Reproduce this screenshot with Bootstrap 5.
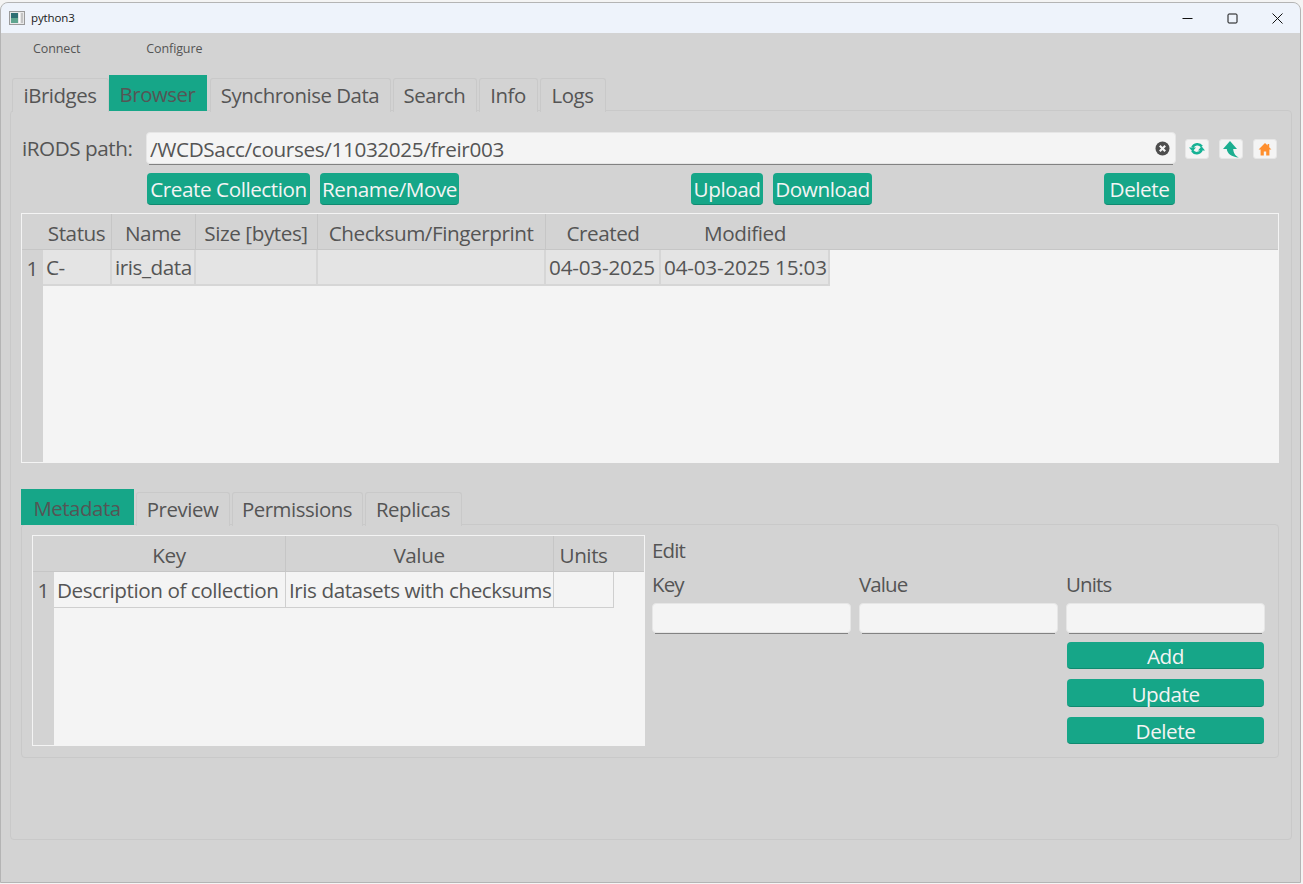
<!DOCTYPE html>
<html lang="en">
<head>
  <meta charset="UTF-8" />
  <meta name="viewport" content="width=device-width, initial-scale=1.0"/>
  <title>python3</title>
  <link href="https://cdn.jsdelivr.net/npm/bootstrap@5.3.2/dist/css/bootstrap.min.css" rel="stylesheet" />
  <style>
    html, body { height: 100%; }
    body {
      background-color: #f4f4f4;
      font-family: "Open Sans", "Noto Sans", sans-serif;
      font-size: 20.7px;
      letter-spacing: -0.45px;
      color: #555;
      overflow: hidden;
    }
    .app-window {
      margin: 2px 2px 0 0;
      height: 881px;
      background: #d3d3d3;
      border: 1px solid #b4b4b4;
      border-top-left-radius: 8px;
      border-top-right-radius: 8px;
      overflow: hidden;
    }
    .title-bar { height: 30px; background: #eef3fb; color: #1a1a1a; font-size: 11.5px; letter-spacing: -0.1px; padding-left: 8px; }
    .title-bar .app-ico { width: 16px; height: 14px; margin-right: 6px; }
    .win-btn { width: 45px; height: 30px; }
    .menu-row { height: 31px; padding: 1px 0 0 32px; font-size: 12.5px; letter-spacing: -0.12px; gap: 66px; }
    .main-area { padding: 11px 8px 0 9px; }

    .tab-strip { border: 0; gap: 2px; align-items: flex-end; padding-left: 2px; height: 36px; position: relative; z-index: 1; font-size: 20.4px; }
    .tab-strip .nav-link {
      color: #555;
      background: #d3d3d3;
      border: 1px solid #c9c9c9;
      border-bottom: 0;
      border-radius: 3px 3px 0 0;
      padding: 0 1px 0 0;
      height: 34px;
      line-height: 33px;
      text-align: center;
    }
    .tab-strip .nav-link.active {
      background: #16a688;
      color: #555;
      border: 0;
      border-radius: 0;
      height: 36px;
      line-height: 38px;
      margin: 0 1px 0 -2px;
      position: relative;
      z-index: 1;
    }
    .tab-strip-sub { padding-left: 0; }
    .tw-ibridges { width: 97px; } .tw-browser { width: 98px; } .tw-sync { width: 181px; }
    .tw-search { width: 84px; } .tw-info { width: 59px; } .tw-logs { width: 66px; }
    .tab-strip .nav-link.active.tw-meta { width: 113px; margin: 0; } .tw-prev { width: 94px; } .tw-perm { width: 131px; } .tw-repl { width: 97px; }

    .tab-panel { height: 730px; border: 1px solid #c9c9c9; border-radius: 4px; padding: 21px 12px 0 10px; margin-top: -1px; }
    .path-label { width: 125px; padding: 1px 0 0 1px; }
    .path-wrap { width: 1030px; height: 33px; position: relative; letter-spacing: -0.35px; }
    .text-field {
      background: linear-gradient(#828282, #828282) no-repeat 3px 100% / calc(100% - 6px) 1px;
      padding-bottom: 1px;
    }
    .text-field .form-control {
      height: 100%;
      background: #f4f4f4;
      border: 1px solid #e6e6e6;
      border-radius: 4px;
      color: #555;
      font-size: inherit;
      letter-spacing: inherit;
      padding: 2px 3px 0;
      box-shadow: none;
    }
    .clear-ico { position: absolute; right: 6px; top: 9px; width: 15px; height: 15px; }
    .ico-btn { width: 24px; height: 20px; padding: 0; background: #f4f4f4; border: 1px solid #e6e6e6; border-radius: 3px; line-height: 1; }
    .ico-btn svg { width: 16px; height: 16px; display: block; margin: 1px auto 0; overflow: visible; }
    .ico-row { gap: 10px; margin-left: 9px; }

    .teal-btn {
      background: #16a688;
      color: #f4f4f4;
      border: 0;
      border-bottom: 1px solid #0f8a70;
      border-radius: 4px;
      padding: 2px 0 0;
      font-size: inherit;
      letter-spacing: inherit;
      line-height: 1;
      height: 32px;
    }
    .teal-btn:hover { background: #16a688; color: #f4f4f4; }
    .action-row { margin: 8px 0 8px 126px; }
    .bw-create { width: 163px; } .bw-rename { width: 139px; margin-left: 10px; }
    .bw-upload { width: 72px; margin-left: 232px; } .bw-download { width: 99px; margin-left: 10px; }
    .bw-delete { width: 71px; margin-left: 232px; }

    .grid-box {
      background: linear-gradient(#d3d3d3, #d3d3d3) no-repeat left top / 21px 100%, #f4f4f4;
      border: 1px solid #f4f4f4;
    }
    .browser-box { height: 250px; }
    .meta-box { width: 613px; height: 211px; flex: none; }
    .data-grid { table-layout: fixed; margin: 0; width: 100%; --bs-table-bg: transparent; --bs-table-color: #555; border-collapse: separate; border-spacing: 0; }
    .data-grid th, .data-grid td { border: 0; padding: 0; height: 36px; font-weight: 400; white-space: nowrap; overflow: hidden; color: #555; box-shadow: none; vertical-align: middle; }
    .data-grid thead th { background: #d3d3d3; text-align: center; padding: 4px 1px 0 0; border-right: 1px solid #c6c6c6; border-bottom: 1px solid #c6c6c6; }
    .data-grid thead th.no-line { border-right: 0; }
    .data-grid tbody td { padding: 1px 0 0 3px; border-right: 1px solid #cfcfcf; border-bottom: 1px solid #cfcfcf; }
    .browser-grid tbody td { background: #e4e4e4; border-right: 2px solid #d6d6d6; border-bottom: 2px solid #d6d6d6; }
    .data-grid tbody td.row-num { background: transparent; border: 0; text-align: right; padding: 1px 5px 0 0; }
    .data-grid tbody td.blank-cell { background: transparent; border: 0; }
    .data-grid tbody td.date-cell { letter-spacing: -0.2px; }

    .lower-tabs { margin-top: 26px; }
    .lower-panel { height: 234px; border: 1px solid #c9c9c9; border-radius: 4px; padding: 10px 0 0 10px; margin-top: -1px; }
    .edit-form { width: 620px; margin-left: 7px; }
    .edit-grid { display: grid; grid-template-columns: repeat(3, 199px); column-gap: 8px; }
    .edit-head { height: 32px; line-height: 30px; font-size: 20.5px; letter-spacing: -0.9px; }
    .edit-label { height: 36px; line-height: 34px; margin-bottom: 0; font-size: 20.5px; letter-spacing: -0.9px; }
    .edit-field { height: 31px; }
    .edit-btns { grid-column: 3; display: grid; row-gap: 10px; padding: 8px 1px 0; }
    .edit-btns .teal-btn { height: 27px; }
    .edit-btns .teal-btn.btn-mid { height: 28px; padding-top: 3px; }
  </style>
</head>
<body>
<div class="app-window d-flex flex-column">
  <div class="title-bar d-flex align-items-center">
    <svg class="app-ico" viewBox="0 0 16 14"><rect x="0.5" y="0.5" width="15" height="13" fill="#e8e8e8" stroke="#9a9a9a"/><rect x="2" y="2" width="7" height="5" fill="#2f6f73"/><rect x="2" y="7" width="7" height="5" fill="#5fa58f"/><rect x="10" y="2" width="1" height="10" fill="#fff"/><rect x="12" y="2" width="2" height="10" fill="#c4c4c4"/></svg>
    <span>python3</span>
    <div class="ms-auto d-flex">
      <div class="win-btn d-flex align-items-center justify-content-center"><svg width="11" height="11" viewBox="0 0 11 11"><path d="M0.5 5.5h10" stroke="#111"/></svg></div>
      <div class="win-btn d-flex align-items-center justify-content-center"><svg width="11" height="11" viewBox="0 0 11 11"><rect x="1" y="1" width="9" height="9" rx="1" fill="none" stroke="#111"/></svg></div>
      <div class="win-btn d-flex align-items-center justify-content-center"><svg width="11" height="11" viewBox="0 0 11 11"><path d="M0.5 0.5l10 10M10.5 0.5l-10 10" stroke="#111"/></svg></div>
    </div>
  </div>
  <div class="menu-row d-flex align-items-center">
    <span>Connect</span><span>Configure</span>
  </div>
  <div class="main-area">
    <ul class="nav nav-tabs tab-strip">
      <li class="nav-item"><a class="nav-link tw-ibridges" href="#">iBridges</a></li>
      <li class="nav-item"><a class="nav-link active tw-browser" href="#">Browser</a></li>
      <li class="nav-item"><a class="nav-link tw-sync" href="#">Synchronise Data</a></li>
      <li class="nav-item"><a class="nav-link tw-search" href="#">Search</a></li>
      <li class="nav-item"><a class="nav-link tw-info" href="#">Info</a></li>
      <li class="nav-item"><a class="nav-link tw-logs" href="#">Logs</a></li>
    </ul>
    <div class="tab-panel">
      <div class="d-flex align-items-center">
        <label class="path-label">iRODS path:</label>
        <div class="path-wrap text-field">
          <input class="form-control" type="text" value="/WCDSacc/courses/11032025/freir003">
          <svg class="clear-ico" viewBox="0 0 15 15"><circle cx="7.5" cy="7.5" r="7" fill="#4d4d4d"/><path d="M4.8 4.8l5.4 5.4M10.2 4.8l-5.4 5.4" stroke="#f4f4f4" stroke-width="2.2"/></svg>
        </div>
        <div class="d-flex ico-row">
          <button class="ico-btn" type="button"><svg viewBox="0 0 16 16"><path d="M12.8 5.6A5.4 5.4 0 0 0 3.4 6.6M3.2 9.8A5.4 5.4 0 0 0 12.6 9" fill="none" stroke="#16b295" stroke-width="2.6"/><path d="M0 6.4H7L3.5 10.6zM9 9.4H16L12.5 5.2z" fill="#16b295"/></svg></button>
          <button class="ico-btn" type="button"><svg viewBox="0 0 16 16"><path d="M7 0L0 8H3.8C4 12.4 8.4 16 16 16.6C12.8 15 10.4 12.6 10.2 8H14z" fill="#1cae90"/></svg></button>
          <button class="ico-btn" type="button"><svg viewBox="0 0 16 16"><path d="M8 2L1.6 8.4H3.6V14.4H6.8V10.4H9.2V14.4H12.4V8.4H14.4L12.2 6.2V3H10.6V4.6z" fill="#ff8f2e"/></svg></button>
        </div>
      </div>
      <div class="d-flex action-row">
        <button class="btn teal-btn bw-create">Create Collection</button>
        <button class="btn teal-btn bw-rename">Rename/Move</button>
        <button class="btn teal-btn bw-upload">Upload</button>
        <button class="btn teal-btn bw-download">Download</button>
        <button class="btn teal-btn bw-delete">Delete</button>
      </div>

      <div class="grid-box browser-box">
        <table class="table data-grid browser-grid">
          <colgroup><col style="width:21px"><col style="width:69px"><col style="width:84px"><col style="width:122px"><col style="width:228px"><col style="width:115px"><col style="width:169px"><col></colgroup>
          <thead><tr><th class="no-line"></th><th>Status</th><th>Name</th><th>Size [bytes]</th><th>Checksum/Fingerprint</th><th class="no-line">Created</th><th class="no-line">Modified</th><th class="no-line"></th></tr></thead>
          <tbody><tr><td class="row-num">1</td><td>C-</td><td>iris_data</td><td></td><td></td><td class="date-cell">04-03-2025</td><td class="date-cell">04-03-2025 15:03</td><td class="blank-cell"></td></tr></tbody>
        </table>
      </div>

      <ul class="nav nav-tabs tab-strip tab-strip-sub lower-tabs">
        <li class="nav-item"><a class="nav-link active tw-meta" href="#">Metadata</a></li>
        <li class="nav-item"><a class="nav-link tw-prev" href="#">Preview</a></li>
        <li class="nav-item"><a class="nav-link tw-perm" href="#">Permissions</a></li>
        <li class="nav-item"><a class="nav-link tw-repl" href="#">Replicas</a></li>
      </ul>
      <div class="lower-panel d-flex">
        <div class="grid-box meta-box">
          <table class="table data-grid">
            <colgroup><col style="width:21px"><col style="width:232px"><col style="width:268px"><col style="width:60px"><col></colgroup>
            <thead><tr><th class="no-line"></th><th>Key</th><th>Value</th><th class="no-line">Units</th><th class="no-line"></th></tr></thead>
            <tbody><tr><td class="row-num">1</td><td>Description of collection</td><td>Iris datasets with checksums</td><td></td><td class="blank-cell"></td></tr></tbody>
          </table>
        </div>
        <div class="edit-form">
          <div class="edit-head">Edit</div>
          <div class="edit-grid">
            <label class="edit-label">Key</label><label class="edit-label">Value</label><label class="edit-label">Units</label>
            <div class="edit-field text-field"><input class="form-control" type="text"></div>
            <div class="edit-field text-field"><input class="form-control" type="text"></div>
            <div class="edit-field text-field"><input class="form-control" type="text"></div>
            <div class="edit-btns">
              <button class="btn teal-btn">Add</button>
              <button class="btn teal-btn btn-mid">Update</button>
              <button class="btn teal-btn">Delete</button>
            </div>
          </div>
        </div>
      </div>
    </div>
  </div>
</div>
</body>
</html>
